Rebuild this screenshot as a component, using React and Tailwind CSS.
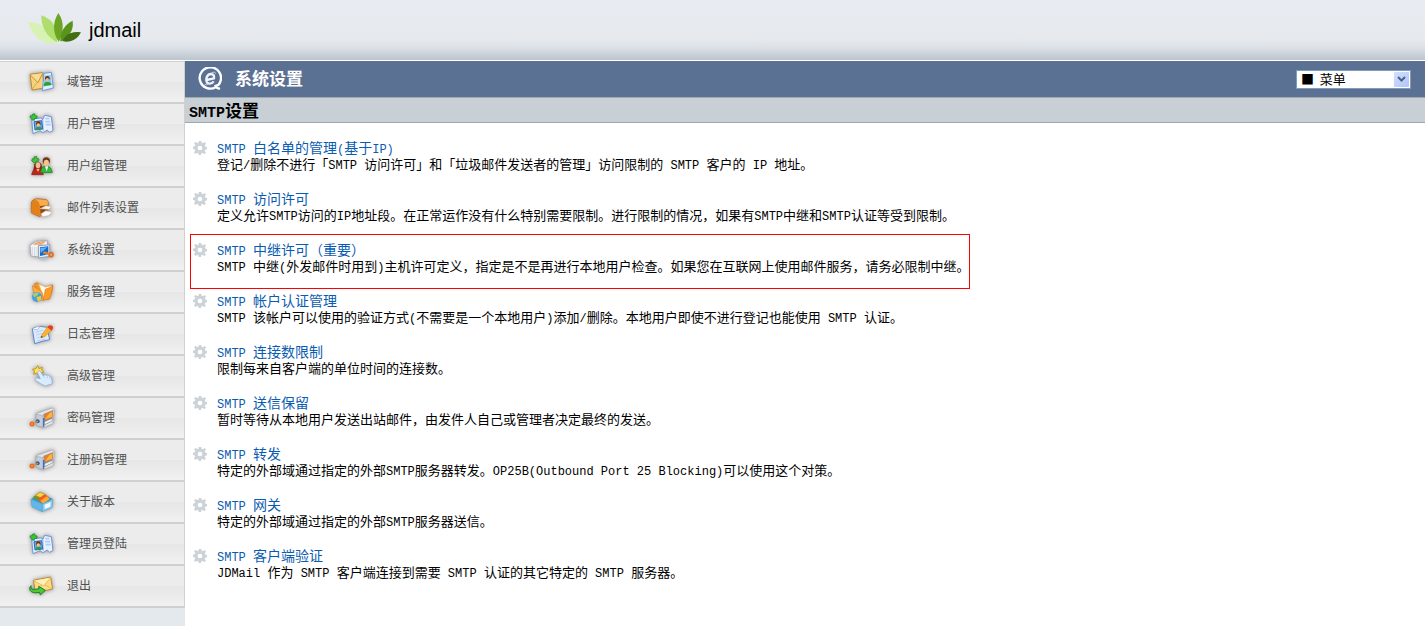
const iconClass = "h-6 w-[27px] shrink-0 drop-shadow-[0_0_2px_rgba(0,0,0,0.4)]";

function IconFrame({ children }) {
  return (
    <svg className={iconClass} viewBox="0 0 81 72" aria-hidden="true">
      {children}
    </svg>
  );
}

function DomainIcon() {
  return (
    <IconFrame>
      <path d="M6 13 L44 8 L48 54 L12 60 Z" fill="#f8d27c" stroke="#b98a35" strokeWidth="3" />
      <path d="M7 15 L30 38 L44 10" fill="#fbdc90" stroke="#c79238" strokeWidth="3" />
      <path d="M12 58 L28 37" stroke="#c79238" strokeWidth="2" />
      <path d="M48 10 L70 7 L76 54 L43 62 Z" fill="#e3efff" stroke="#6f9ae0" strokeWidth="3" />
      <path d="M50 17 L68 14 L71 45 L46 50 Z" fill="#8ec5f5" />
      <circle cx="58" cy="25" r="7" fill="#6b3512" />
      <circle cx="58" cy="29" r="5" fill="#f7bb83" />
      <path d="M46 48 Q48 35 58 36 Q69 35 71 45 Z" fill="#27a52b" />
    </IconFrame>
  );
}

function UserCardIcon() {
  return (
    <IconFrame>
      <path d="M11 20 L38 18 L44 23 L50 10 L70 14 L75 56 L64 61 L58 54 L45 62 L36 56 L15 65 Z" fill="#e6f0ff" stroke="#7593d6" strokeWidth="3" />
      <path d="M44 23 L46 56" stroke="#a8c2ee" strokeWidth="4" />
      <path d="M52 20 H64 M52 29 H66 M53 38 H68" stroke="#b2cdf3" strokeWidth="5" />
      <path d="M18 29 L41 26 L44 51 L21 54 Z" fill="#67a9ed" stroke="#2c66bd" strokeWidth="3" />
      <circle cx="31" cy="35" r="7" fill="#70320e" />
      <circle cx="31" cy="39" r="5" fill="#f9c28a" />
      <path d="M22 53 Q23 44 32 44 Q41 44 42 51 Z" fill="#2f9f2d" />
      <path d="M13 7 L20 5 L21 11 L27 12 L27 19 L20 20 L19 25 L12 24 L11 19 L6 17 L7 11 L13 11 Z" fill="#35c43a" stroke="#168122" strokeWidth="2" />
    </IconFrame>
  );
}

function GroupIcon() {
  return (
    <IconFrame>
      <path d="M19 31 Q30 17 40 30 L46 52 L15 54 Z" fill="#802c16" />
      <ellipse cx="30" cy="34" rx="7" ry="9" fill="#f6bd8e" />
      <path d="M11 62 Q14 43 29 44 Q44 43 46 62 Z" fill="#bd251c" stroke="#8c1712" strokeWidth="2" />
      <path d="M25 44 L30 54 L35 44 Z" fill="#f6bd8e" />
      <circle cx="55" cy="21" r="11" fill="#733512" />
      <ellipse cx="55" cy="27" rx="8" ry="10" fill="#f9c18a" />
      <path d="M38 56 Q39 36 55 37 Q71 37 73 56 Z" fill="#32b935" stroke="#187d20" strokeWidth="2" />
      <path d="M51 37 L56 52 L61 37 Z" fill="#f8f8f8" />
      <path d="M18 9 L25 7 L27 13 L33 15 L31 22 L25 22 L23 28 L16 25 L11 20 L13 14 L18 15 Z" fill="#3fc43e" stroke="#197d21" strokeWidth="2" />
    </IconFrame>
  );
}

function MailboxIcon() {
  return (
    <IconFrame>
      <path d="M10 22 Q12 9 28 8 L54 11 Q62 13 61 29 L60 43 L35 62 L10 51 Z" fill="#e9881f" stroke="#a95509" strokeWidth="2" />
      <path d="M20 9 L54 12 Q62 15 59 27 L35 29 Q34 15 20 9 Z" fill="#f8ad50" />
      <path d="M11 25 Q13 13 24 14 Q35 16 35 31 L35 61 L10 51 Z" fill="#e2801c" />
      <path d="M36 31 L60 28 L59 44 L38 55 Z" fill="#8a480f" />
      <path d="M36 38 L54 29 L71 32 L62 40 Z" fill="#fff4e6" stroke="#d4bda9" strokeWidth="2" />
      <path d="M39 53 L54 44 L73 49 L61 59 L43 62 Z" fill="#fff" stroke="#c8b7a8" strokeWidth="2" />
    </IconFrame>
  );
}

function SystemIcon() {
  return (
    <IconFrame>
      <path d="M6 22 L24 10 L58 8 L59 24 L43 58 L9 54 Z" fill="#f3f5f8" stroke="#a5acb6" strokeWidth="3" />
      <path d="M15 20 L27 11 L54 10 L42 20 Z" fill="#f79a55" />
      <path d="M23 10 L34 20 M34 9 L46 19 M13 27 V51 M20 27 V54 M27 28 V55" stroke="#d3d7dd" strokeWidth="3" />
      <path d="M31 23 L65 20 L66 55 L32 60 Z" fill="#e3ebf6" stroke="#94a2b8" strokeWidth="3" />
      <path d="M36 28 L61 25 L61 49 L36 54 Z" fill="#1867c9" />
      <path d="M37 30 L59 27 L38 45 Z" fill="#5db3f8" />
      <circle cx="69" cy="50" r="6" fill="none" stroke="#f06918" strokeWidth="5" />
      <path d="M63 47 L49 42 L47 48 M55 44 L53 50" fill="none" stroke="#f18d23" strokeWidth="4" />
      <path d="M38 60 H58 V65 H38 Z" fill="#bac5d4" />
    </IconFrame>
  );
}

function ServiceIcon() {
  return (
    <IconFrame>
      <path d="M18 12 L27 8 L50 23 L74 14 L72 34 L63 58 L42 56 Z" fill="#f79421" stroke="#d4741c" strokeWidth="2" />
      <path d="M32 12 L52 21 L70 17 L62 50 L48 54 Z" fill="#fffbed" stroke="#f2b16a" strokeWidth="2" />
      <path d="M13 17 L42 36 L46 62 L19 45 Z" fill="#ffae37" stroke="#e28120" strokeWidth="2" />
      <path d="M52 28 L75 19 L66 55 L46 61 Z" fill="#fb9c25" stroke="#e28120" strokeWidth="2" />
      <circle cx="27" cy="51" r="15" fill="#4a9ee1" />
      <path d="M15 43 Q25 34 33 39 L26 48 L18 52 Z" fill="#a1d36f" />
      <path d="M25 52 L39 47 L39 58 L31 66 Z" fill="#f7c928" />
    </IconFrame>
  );
}

function LogIcon() {
  return (
    <IconFrame>
      <path d="M13 20 L38 13 L57 16 L65 53 L42 58 L20 65 Z" fill="#ddebff" stroke="#6284c9" strokeWidth="3" />
      <path d="M13 20 L28 24 L36 13" fill="#fff" stroke="#8da6d7" strokeWidth="2" />
      <path d="M22 31 L46 25 M24 39 L50 33 M26 48 L54 42 M28 56 L52 51" stroke="#a3c0ec" strokeWidth="2" />
      <path d="M41 40 L59 14 L71 24 L50 44 L39 46 Z" fill="#f9b429" stroke="#e0921f" strokeWidth="2" />
      <path d="M58 15 Q65 5 74 13 Q78 20 70 26 Z" fill="#e93c27" />
      <path d="M40 41 L46 46 L38 47 Z" fill="#674524" />
    </IconFrame>
  );
}

function HandIcon() {
  return (
    <IconFrame>
      <path d="M29 5 L33 14 L43 10 L41 19 L48 24 L38 27 L33 34 L27 27 L17 31 L20 21 L13 16 L24 14 Z" fill="#ffe35b" stroke="#c79724" strokeWidth="3" />
      <path d="M30 22 Q34 17 38 23 L45 35 Q51 30 56 34 Q62 31 65 37 Q71 37 71 44 L73 59 L52 66 L38 59 L22 49 Q19 42 28 42 L37 44 L29 28 Z" fill="#d9ecff" stroke="#86a8d4" strokeWidth="2" />
      <path d="M46 35 L49 42 M57 35 L59 43 M65 38 L66 46" stroke="#a9c6e6" strokeWidth="2" />
    </IconFrame>
  );
}

function SafeIcon() {
  return (
    <IconFrame>
      <path d="M24 23 L72 6 L79 10 L75 53 L44 66 L25 58 Z" fill="#e1e4e8" stroke="#a3a8af" strokeWidth="2" />
      <path d="M46 24 L76 12 L73 46 L49 58 Z" fill="#8b9096" />
      <path d="M50 25 L75 14 L73 33 L50 43 Z" fill="#f9791a" />
      <path d="M51 40 L64 22 L73 17 L72 32 Z" fill="#ffb43a" />
      <path d="M50 48 L72 38 L71 45 L50 55 Z" fill="#edf0f3" />
      <path d="M24 25 L45 29 L44 64 L25 57 Z" fill="#c6ccd4" stroke="#a0a8b2" strokeWidth="2" />
      <path d="M45 36 L49 36 L49 62 L45 64 Z" fill="#3a70bc" />
      <circle cx="29" cy="46" r="6" fill="#1d64b6" />
      <circle cx="12" cy="54" r="5" fill="none" stroke="#ed6b19" strokeWidth="5" />
      <path d="M17 51 L30 46" stroke="#f28a23" strokeWidth="4" />
    </IconFrame>
  );
}

function BoxIcon() {
  return (
    <IconFrame>
      <path d="M9 28 L37 8 L74 27 L44 45 Z" fill="#3d91c6" />
      <path d="M14 22 L34 8 L57 24 L42 38 Z" fill="#6b9a22" />
      <path d="M22 17 L36 6 L56 16 L46 26 Z" fill="#ffd442" stroke="#a8801a" strokeWidth="2" />
      <path d="M30 26 L50 13 L63 22 L42 40 Z" fill="#f05a27" />
      <path d="M37 32 L57 19 L65 27 L45 41 Z" fill="#ffab29" />
      <path d="M9 28 L43 42 L43 65 L12 51 Z" fill="#62b7e7" stroke="#5aa5d2" strokeWidth="2" />
      <path d="M43 42 L75 28 L72 53 L43 65 Z" fill="#8acaf0" stroke="#5aa5d2" strokeWidth="2" />
      <path d="M50 44 L68 36 L67 50 L50 57 Z" fill="#f2faff" />
    </IconFrame>
  );
}

function ExitIcon() {
  return (
    <IconFrame>
      <path d="M16 19 L68 9 L74 45 L23 56 Z" fill="#ffdc83" stroke="#bd8c35" strokeWidth="3" />
      <path d="M17 20 L47 36 L68 11" fill="#ffefb6" stroke="#d4a34b" strokeWidth="2" />
      <path d="M23 55 L40 34 M74 45 L51 33" stroke="#d9aa56" strokeWidth="2" />
      <path d="M9 35 Q8 49 21 46 L33 44 L32 37 L52 49 L37 63 L35 55 Q13 60 6 49 Q3 41 9 35 Z" fill="#4bc83c" stroke="#187e22" strokeWidth="3" />
    </IconFrame>
  );
}

function Logo() {
  return (
    <svg className="h-8 w-[54px]" viewBox="84 36 162 96" aria-hidden="true">
      <path d="M84 66 Q119 66 141 91 Q160 109 168 131 Q129 133 107 108 Q91 91 84 66 Z" fill="#d8f2b4" />
      <path d="M124 46 Q155 56 166 83 Q173 104 171 127 Q146 114 134 91 Q123 68 124 46 Z" fill="#aede6b" />
      <path d="M175 39 Q190 61 188 84 Q187 108 176 125 Q162 105 162 80 Q163 58 175 39 Z" fill="#6ba523" />
      <path d="M218 62 Q221 86 209 102 Q199 117 181 125 Q180 104 190 87 Q200 70 218 62 Z" fill="#5a951b" />
      <path d="M243 97 Q232 119 211 124 Q198 127 187 123 Q196 105 211 100 Q226 94 243 97 Z" fill="#416e12" />
      <path d="M174 127 L180 124 L186 129 L177 132 Z" fill="#e4efd6" />
    </svg>
  );
}

function TitleIcon() {
  return (
    <svg className="h-6 w-6" viewBox="0 0 72 72" fill="none" aria-hidden="true">
      <path d="M54 60 A32 32 0 1 1 67 44 Q64 55 53 57 Q56 66 66 64" stroke="#fff" strokeWidth="7" />
      <path d="M26 39 L48 34 Q50 21 38 21 Q27 22 25 36 Q24 50 35 50 Q42 50 47 43" stroke="#f2f5fa" strokeWidth="7" />
      <path d="M20 52 Q24 56 32 50 M40 18 Q52 12 53 20" stroke="#c9d2e0" strokeWidth="3" />
    </svg>
  );
}

function GearIcon() {
  return (
    <svg className="mt-[2px] h-[14px] w-[14px] shrink-0" viewBox="0 0 42 42" aria-hidden="true">
      <path
        d="M17 0 H25 L26 5 L30 7 L35 3 L39 7 L36 12 L37 17 L42 18 V25 L37 26 L35 30 L39 35 L34 39 L29 36 L25 37 L24 42 H17 L16 37 L12 36 L7 39 L3 34 L6 29 L5 25 L0 24 V17 L5 16 L7 12 L3 7 L8 3 L13 6 L17 5 Z M21 14 A7 7 0 1 0 21 28 A7 7 0 1 0 21 14 Z"
        fill="#ccd3d8"
        fillRule="evenodd"
      />
    </svg>
  );
}

const navigation = [
  { label: "域管理", icon: DomainIcon },
  { label: "用户管理", icon: UserCardIcon },
  { label: "用户组管理", icon: GroupIcon },
  { label: "邮件列表设置", icon: MailboxIcon },
  { label: "系统设置", icon: SystemIcon },
  { label: "服务管理", icon: ServiceIcon },
  { label: "日志管理", icon: LogIcon },
  { label: "高级管理", icon: HandIcon },
  { label: "密码管理", icon: SafeIcon },
  { label: "注册码管理", icon: SafeIcon },
  { label: "关于版本", icon: BoxIcon },
  { label: "管理员登陆", icon: UserCardIcon },
  { label: "退出", icon: ExitIcon },
];

const settings = [
  {
    title: "SMTP 白名单的管理(基于IP)",
    description: "登记/删除不进行「SMTP 访问许可」和「垃圾邮件发送者的管理」访问限制的 SMTP 客户的 IP 地址。",
  },
  {
    title: "SMTP 访问许可",
    description: "定义允许SMTP访问的IP地址段。在正常运作没有什么特别需要限制。进行限制的情况，如果有SMTP中继和SMTP认证等受到限制。",
  },
  {
    title: "SMTP 中继许可（重要）",
    description: "SMTP 中继(外发邮件时用到)主机许可定义，指定是不是再进行本地用户检查。如果您在互联网上使用邮件服务，请务必限制中继。",
    important: true,
  },
  {
    title: "SMTP 帐户认证管理",
    description: "SMTP 该帐户可以使用的验证方式(不需要是一个本地用户)添加/删除。本地用户即使不进行登记也能使用 SMTP 认证。",
  },
  {
    title: "SMTP 连接数限制",
    description: "限制每来自客户端的单位时间的连接数。",
  },
  {
    title: "SMTP 送信保留",
    description: "暂时等待从本地用户发送出站邮件，由发件人自己或管理者决定最终的发送。",
  },
  {
    title: "SMTP 转发",
    description: "特定的外部域通过指定的外部SMTP服务器转发。OP25B(Outbound Port 25 Blocking)可以使用这个对策。",
  },
  {
    title: "SMTP 网关",
    description: "特定的外部域通过指定的外部SMTP服务器送信。",
  },
  {
    title: "SMTP 客户端验证",
    description: "JDMail 作为 SMTP 客户端连接到需要 SMTP 认证的其它特定的 SMTP 服务器。",
  },
];

// Latin runs are set in a narrow monospace face so they are half as wide as the Chinese text
function MixedText({ text }) {
  return text.split(/([\x20-\x7e]+)/).map((part, index) =>
    index % 2 === 1 ? (
      <span key={index} className="font-['Liberation_Mono',monospace] text-[12px] leading-none">
        {part}
      </span>
    ) : (
      part
    )
  );
}

function Sidebar() {
  return (
    <nav className="w-[185px] shrink-0 bg-[#e4e9ed]">
      <ul className="border-t border-r border-[#d0d0d0]">
        {navigation.map((item) => {
          const Icon = item.icon;

          return (
            <li key={item.label} className="border-b-2 border-[#d0d0d0]">
              <a
                href="#"
                className="flex h-10 items-center gap-3 bg-[linear-gradient(#ececec_50%,#e6e6e6_50%,#f1f1f1)] pl-7 text-[12px] text-[#505050]"
              >
                <Icon />
                <span className="pb-[2px]">{item.label}</span>
              </a>
            </li>
          );
        })}
      </ul>
    </nav>
  );
}

function SettingItem({ title, description, important }) {
  return (
    <li className="relative flex h-[51px] w-fit items-start gap-[10px] pt-[7px] pr-px pl-[3px]">
      <GearIcon />
      <div>
        <a href="#" className="block text-[14px] leading-4 text-[#0a5cb0]">
          <MixedText text={title} />
        </a>
        <p className="text-[13px] leading-4">
          <MixedText text={description} />
        </p>
      </div>
      {important && (
        <span className="pointer-events-none absolute inset-x-0 top-0 -bottom-1 border border-[#ff0000]" />
      )}
    </li>
  );
}

function App() {
  return (
    <div className="flex min-h-screen flex-col bg-white font-['Noto_Sans_CJK_SC',sans-serif] text-black">
      <header className="flex h-[61px] items-center gap-[7px] border-b border-white bg-[linear-gradient(#e8ebf1_0%,#e6eaef_65%,#dbe0e6_80%,#bcc4cd_100%)] pb-1 pl-7">
        <Logo />
        <span className="pt-1 font-['Liberation_Sans',sans-serif] text-[20px] leading-6">jdmail</span>
      </header>

      <div className="flex flex-1">
        <Sidebar />

        <main className="min-w-0 flex-1">
          <div className="flex h-9 items-center bg-[#5b7194] pr-[14px] pl-[13px] text-white">
            <TitleIcon />
            <h1 className="ml-[13px] pb-[2px] text-[17px] font-bold">系统设置</h1>
            <div className="relative ml-auto">
              <select
                aria-label="菜单"
                className="block h-[19px] w-[115px] appearance-none border border-[#7f9db9] bg-white pl-1 text-[13px] leading-4 text-black"
              >
                <option>■&nbsp; 菜单</option>
              </select>
              <span className="pointer-events-none absolute top-[2px] right-[2px] flex h-[15px] w-[15px] items-center justify-center rounded-[1px] bg-[linear-gradient(135deg,#d3dffe,#b0c5fb)]">
                <svg className="h-[6px] w-[9px]" viewBox="0 0 9 6" aria-hidden="true">
                  <path d="M1 1 L4.5 4.5 L8 1" fill="none" stroke="#4d6185" strokeWidth="2" />
                </svg>
              </span>
            </div>
          </div>

          <h2 className="h-[26px] border-y border-[#a0a9b0] bg-[#c8cfd5] pl-1 text-[17px] leading-6 font-bold">
            <span className="font-['Liberation_Mono',monospace] text-[15px] leading-none">SMTP</span>
            设置
          </h2>

          <ul className="pt-[9px] pl-[5px]">
            {settings.map((item) => (
              <SettingItem key={item.title} {...item} />
            ))}
          </ul>
        </main>
      </div>
    </div>
  );
}

export default App;
